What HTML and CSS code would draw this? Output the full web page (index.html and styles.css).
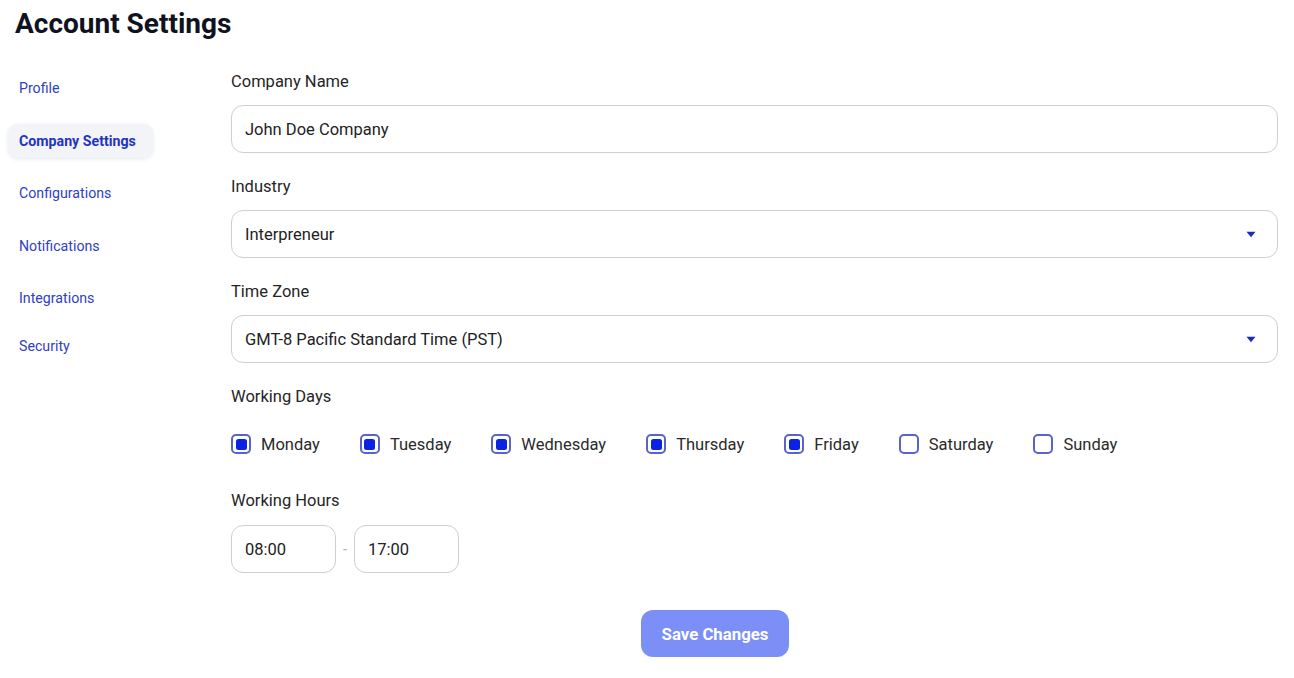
FILE: index.html
```html
<!DOCTYPE html>
<html>
<head>
<meta charset="utf-8">
<link rel="stylesheet" href="styles.css">
</head>
<body>
<h1 class="title">Account Settings</h1>
<div class="layout">
  <nav class="sidebar">
    <a class="nav-item">Profile</a>
    <a class="nav-item active">Company Settings</a>
    <a class="nav-item">Configurations</a>
    <a class="nav-item">Notifications</a>
    <a class="nav-item">Integrations</a>
    <a class="nav-item last">Security</a>
  </nav>
  <main class="form">
    <div class="label">Company Name</div>
    <div class="field">John Doe Company</div>

    <div class="label mt">Industry</div>
    <div class="field select">
      <span>Interpreneur</span>
      <svg class="caret" width="10" height="7" viewBox="0 0 10 7"><path d="M0.5 0.8 H9.5 L5 6.2 Z" fill="#1a2ac4"/></svg>
    </div>

    <div class="label mt">Time Zone</div>
    <div class="field select">
      <span>GMT-8 Pacific Standard Time (PST)</span>
      <svg class="caret" width="10" height="7" viewBox="0 0 10 7"><path d="M0.5 0.8 H9.5 L5 6.2 Z" fill="#1a2ac4"/></svg>
    </div>

    <div class="label mt">Working Days</div>
    <div class="days">
      <label class="day"><span class="box checked"></span>Monday</label>
      <label class="day"><span class="box checked"></span>Tuesday</label>
      <label class="day"><span class="box checked"></span>Wednesday</label>
      <label class="day"><span class="box checked"></span>Thursday</label>
      <label class="day"><span class="box checked"></span>Friday</label>
      <label class="day"><span class="box"></span>Saturday</label>
      <label class="day"><span class="box"></span>Sunday</label>
    </div>

    <div class="label mt-hours">Working Hours</div>
    <div class="hours">
      <div class="field time">08:00</div>
      <span class="dash">-</span>
      <div class="field time">17:00</div>
    </div>

    <div class="actions">
      <button class="save">Save Changes</button>
    </div>
  </main>
</div>
</body>
</html>
```

FILE: styles.css
```css
* { box-sizing: border-box; }
body {
  margin: 0;
  font-family: Roboto, "Liberation Sans", sans-serif;
  background: #fff;
  color: #222;
}
.title {
  margin: 0;
  padding: 8px 0 0 15px;
  font-size: 28px;
  line-height: 32px;
  font-weight: 700;
  color: #0f1220;
}
.layout {
  display: flex;
  padding: 0 16px 0 8px;
}
.sidebar {
  width: 223px;
  flex: none;
  display: flex;
  flex-direction: column;
  align-items: flex-start;
  padding-top: 31px;
}
.nav-item {
  display: block;
  height: 34px;
  line-height: 34px;
  padding: 0 17px 0 11px;
  margin-bottom: 18.5px;
  font-size: 14.2px;
  color: #3040c4;
  border-radius: 10px;
}
.nav-item.last { margin-top: -4.5px; }
.nav-item.active {
  font-weight: 700;
  background: #f3f4f8;
  box-shadow: 0 1px 4px rgba(20, 30, 80, 0.10);
  color: #2233c0;
}
.form {
  flex: 1;
  padding-top: 32px;
}
.label {
  font-size: 16.5px;
  line-height: 20px;
  color: #252525;
  margin-bottom: 13px;
}
.mt { margin-top: 24px; }
.mt-hours { margin-top: 35px; margin-bottom: 14px; }
.field {
  height: 48px;
  border: 1px solid #cfcfcf;
  border-radius: 12px;
  padding: 0 13px;
  display: flex;
  align-items: center;
  font-size: 16.5px;
  color: #222;
}
.select { justify-content: space-between; padding-right: 21px; }
.caret { display: block; }
.days {
  display: flex;
  align-items: center;
  gap: 40px;
  margin-top: 25px;
  height: 24px;
}
.day {
  display: flex;
  align-items: center;
  gap: 10px;
  font-size: 16.5px;
  color: #2a2a2a;
}
.box {
  width: 20px;
  height: 20px;
  border: 2px solid #5a62cc;
  border-radius: 5px;
  display: flex;
  align-items: center;
  justify-content: center;
}
.box.checked::after {
  content: "";
  width: 11px;
  height: 11px;
  border-radius: 2.5px;
  background: #0a22e6;
}
.hours {
  display: flex;
  align-items: center;
}
.time { width: 105px; }
.dash {
  width: 18px;
  text-align: center;
  color: #b0b0b0;
  font-size: 15px;
}
.actions {
  margin-top: 37px;
  padding-left: 410px;
}
.save {
  width: 148px;
  height: 47px;
  border: none;
  border-radius: 12px;
  background: #7b8ff6;
  color: #fff;
  font-family: Roboto, "Liberation Sans", sans-serif;
  font-size: 16.8px;
  font-weight: 700;
}
```
